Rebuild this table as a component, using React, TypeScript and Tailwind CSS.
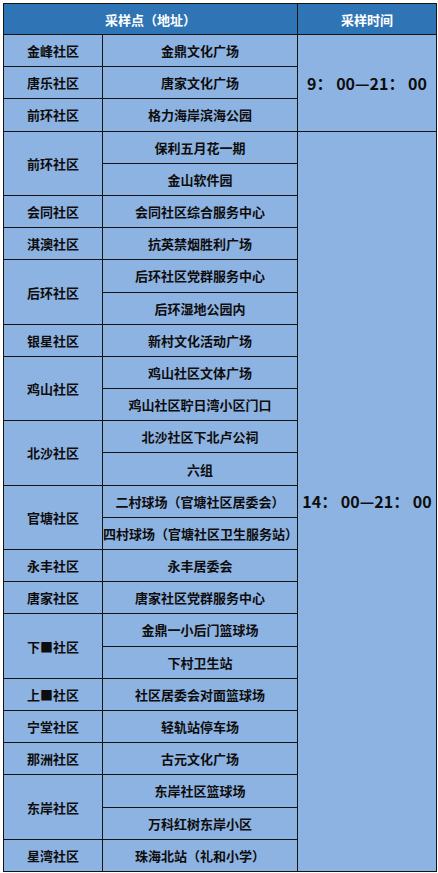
import React from "react";

type Group = { name: string; places: string[] };

const groups: Group[] = [
  { name: "金峰社区", places: ["金鼎文化广场"] },
  { name: "唐乐社区", places: ["唐家文化广场"] },
  { name: "前环社区", places: ["格力海岸滨海公园"] },
  { name: "前环社区", places: ["保利五月花一期", "金山软件园"] },
  { name: "会同社区", places: ["会同社区综合服务中心"] },
  { name: "淇澳社区", places: ["抗英禁烟胜利广场"] },
  { name: "后环社区", places: ["后环社区党群服务中心", "后环湿地公园内"] },
  { name: "银星社区", places: ["新村文化活动广场"] },
  { name: "鸡山社区", places: ["鸡山社区文体广场", "鸡山社区聍日湾小区门口"] },
  { name: "北沙社区", places: ["北沙社区下北卢公祠", "六组"] },
  { name: "官塘社区", places: ["二村球场（官塘社区居委会）", "四村球场（官塘社区卫生服务站）"] },
  { name: "永丰社区", places: ["永丰居委会"] },
  { name: "唐家社区", places: ["唐家社区党群服务中心"] },
  { name: "下■社区", places: ["金鼎一小后门篮球场", "下村卫生站"] },
  { name: "上■社区", places: ["社区居委会对面篮球场"] },
  { name: "宁堂社区", places: ["轻轨站停车场"] },
  { name: "那洲社区", places: ["古元文化广场"] },
  { name: "东岸社区", places: ["东岸社区篮球场", "万科红树东岸小区"] },
  { name: "星湾社区", places: ["珠海北站（礼和小学）"] },
];

const cell = "border border-[#141414] text-center align-middle p-0";

export default function App() {
  const rows: React.ReactNode[] = [];
  let idx = 0;
  groups.forEach((g, gi) => {
    g.places.forEach((p, pi) => {
      rows.push(
        <tr key={`${gi}-${pi}`} className="h-[32.2px]">
          {pi === 0 && (
            <td rowSpan={g.places.length} className={cell}>
              {g.name}
            </td>
          )}
          <td className={cell}>{p}</td>
          {idx === 0 && (
            <td rowSpan={3} className={`${cell} text-[16px]`}>
              9：&nbsp;00—21：&nbsp;00
            </td>
          )}
          {idx === 3 && (
            <td rowSpan={23} className={`${cell} text-[16px]`}>
              14：&nbsp;00—21：&nbsp;00
            </td>
          )}
        </tr>
      );
      idx++;
    });
  });

  return (
    <div
      className="bg-white w-[438px] h-[873px] pt-[3px] pl-[3px]"
      style={{ fontFamily: '"Noto Sans CJK SC", "Noto Sans", sans-serif' }}
    >
      <table className="table-fixed border-collapse w-[433px] bg-[#8db3e2] text-[13px] font-bold text-[#0d0d0d] leading-none">
        <colgroup>
          <col className="w-[99px]" />
          <col className="w-[195px]" />
          <col className="w-[139px]" />
        </colgroup>
        <thead>
          <tr className="h-[31px] bg-[#2f75b5] text-white">
            <th colSpan={2} className={`${cell} font-bold`}>
              采样点（地址）
            </th>
            <th className={`${cell} font-bold`}>采样时间</th>
          </tr>
        </thead>
        <tbody>{rows}</tbody>
      </table>
    </div>
  );
}
